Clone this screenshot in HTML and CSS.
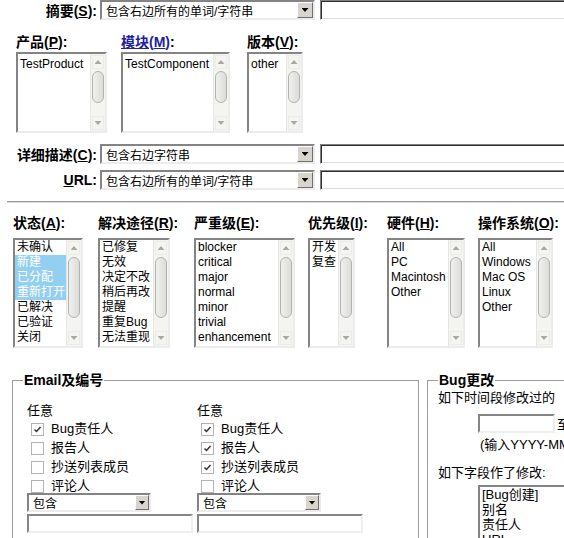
FILE: index.html
```html
<!DOCTYPE html>
<html lang="zh-CN">
<head>
<meta charset="UTF-8">
<meta name="viewport" content="width=device-width, initial-scale=1.0">
<title>查找Bug</title>
<link rel="stylesheet" href="styles.css">
</head>
<body>

<form class="query">

    <div class="text-row">
        <label class="field-label">摘要(<u>S</u>):</label>
        <div class="select wide"><span>包含右边所有的单词/字符串</span><b class="drop"></b></div>
        <input class="text-input" type="text">
    </div>

    <div class="pickers">
        <div class="col">
            <div class="col-title">产品(<u>P</u>):</div>
            <div class="listbox short product">
                <div class="items"><div>TestProduct</div></div>
                <div class="scroll"><i class="up"></i><i class="thumb"></i><i class="down"></i></div>
            </div>
        </div>
        <div class="col">
            <div class="col-title"><a href="#">模块(<u>M</u>)</a>:</div>
            <div class="listbox short component">
                <div class="items"><div>TestComponent</div></div>
                <div class="scroll"><i class="up"></i><i class="thumb"></i><i class="down"></i></div>
            </div>
        </div>
        <div class="col">
            <div class="col-title">版本(<u>V</u>):</div>
            <div class="listbox short version">
                <div class="items"><div>other</div></div>
                <div class="scroll"><i class="up"></i><i class="thumb"></i><i class="down"></i></div>
            </div>
        </div>
    </div>

    <div class="text-row desc">
        <label class="field-label">详细描述(<u>C</u>):</label>
        <div class="select wide"><span>包含右边字符串</span><b class="drop"></b></div>
        <input class="text-input" type="text">
    </div>
    <div class="text-row url">
        <label class="field-label"><u>U</u>RL:</label>
        <div class="select wide"><span>包含右边所有的单词/字符串</span><b class="drop"></b></div>
        <input class="text-input" type="text">
    </div>

    <hr class="rule">

    <div class="attrs">
        <div class="col">
            <div class="col-title">状态(<u>A</u>):</div>
            <div class="listbox tall status">
                <div class="items">
                    <div>未确认</div>
                    <div class="sel">新建</div>
                    <div class="sel">已分配</div>
                    <div class="sel">重新打开</div>
                    <div>已解决</div>
                    <div>已验证</div>
                    <div>关闭</div>
                </div>
                <div class="scroll"><i class="up"></i><i class="thumb"></i><i class="down"></i></div>
            </div>
        </div>
        <div class="col">
            <div class="col-title">解决途径(<u>R</u>):</div>
            <div class="listbox tall resolution">
                <div class="items">
                    <div>已修复</div>
                    <div>无效</div>
                    <div>决定不改</div>
                    <div>稍后再改</div>
                    <div>提醒</div>
                    <div>重复Bug</div>
                    <div>无法重现</div>
                </div>
                <div class="scroll"><i class="up"></i><i class="thumb"></i><i class="down"></i></div>
            </div>
        </div>
        <div class="col">
            <div class="col-title">严重级(<u>E</u>):</div>
            <div class="listbox tall severity">
                <div class="items">
                    <div>blocker</div>
                    <div>critical</div>
                    <div>major</div>
                    <div>normal</div>
                    <div>minor</div>
                    <div>trivial</div>
                    <div>enhancement</div>
                </div>
                <div class="scroll"><i class="up"></i><i class="thumb"></i><i class="down"></i></div>
            </div>
        </div>
        <div class="col">
            <div class="col-title">优先级(<u>I</u>):</div>
            <div class="listbox tall priority">
                <div class="items">
                    <div>开发</div>
                    <div>复查</div>
                </div>
                <div class="scroll"><i class="up"></i><i class="thumb"></i><i class="down"></i></div>
            </div>
        </div>
        <div class="col">
            <div class="col-title">硬件(<u>H</u>):</div>
            <div class="listbox tall hardware">
                <div class="items">
                    <div>All</div>
                    <div>PC</div>
                    <div>Macintosh</div>
                    <div>Other</div>
                </div>
                <div class="scroll"><i class="up"></i><i class="thumb"></i><i class="down"></i></div>
            </div>
        </div>
        <div class="col">
            <div class="col-title">操作系统(<u>O</u>):</div>
            <div class="listbox tall os">
                <div class="items">
                    <div>All</div>
                    <div>Windows</div>
                    <div>Mac OS</div>
                    <div>Linux</div>
                    <div>Other</div>
                </div>
                <div class="scroll"><i class="up"></i><i class="thumb"></i><i class="down"></i></div>
            </div>
        </div>
    </div>

    <div class="lower">
        <fieldset class="email">
            <legend>Email及编号</legend>
            <div class="email-cols">
                <div class="email-col">
                    <div class="any">任意</div>
                    <div class="cb-row"><span class="cb checked"><svg viewBox="0 0 11 11"><polyline points="2.5,5.5 4.5,7.5 8.5,3"/></svg></span>Bug责任人</div>
                    <div class="cb-row"><span class="cb"></span>报告人</div>
                    <div class="cb-row"><span class="cb"></span>抄送列表成员</div>
                    <div class="cb-row"><span class="cb"></span>评论人</div>
                    <div class="select small"><span>包含</span><b class="drop"></b></div>
                    <input class="text-input small" type="text">
                </div>
                <div class="email-col">
                    <div class="any">任意</div>
                    <div class="cb-row"><span class="cb checked"><svg viewBox="0 0 11 11"><polyline points="2.5,5.5 4.5,7.5 8.5,3"/></svg></span>Bug责任人</div>
                    <div class="cb-row"><span class="cb checked"><svg viewBox="0 0 11 11"><polyline points="2.5,5.5 4.5,7.5 8.5,3"/></svg></span>报告人</div>
                    <div class="cb-row"><span class="cb checked"><svg viewBox="0 0 11 11"><polyline points="2.5,5.5 4.5,7.5 8.5,3"/></svg></span>抄送列表成员</div>
                    <div class="cb-row"><span class="cb"></span>评论人</div>
                    <div class="select small"><span>包含</span><b class="drop"></b></div>
                    <input class="text-input small" type="text">
                </div>
            </div>
        </fieldset>

        <fieldset class="changes">
            <legend>Bug更改</legend>
            <div class="since">如下时间段修改过的</div>
            <div class="date-row"><input class="text-input small date" type="text"> 至 <input class="text-input small date" type="text"></div>
            <div class="hint">(输入YYYY-MM-DD或相对日期)</div>
            <div class="since fields">如下字段作了修改:</div>
            <div class="listbox fields-list">
                <div class="items">
                    <div>[Bug创建]</div>
                    <div>别名</div>
                    <div>责任人</div>
                    <div>URL</div>
                    <div>抄送</div>
                </div>
            </div>
        </fieldset>
    </div>

</form>

</body>
</html>
```

FILE: styles.css
```css
* {
    box-sizing: border-box;
}
html, body {
    overflow: hidden;
}
body {
    margin: 0;
    font-family: "Liberation Sans", "Noto Sans CJK SC", sans-serif;
    font-size: 13px;
    color: #000;
    background: #fff;
}
.query {
    width: 720px;
}

/* label + select + text rows */
.text-row {
    display: flex;
    align-items: center;
    height: 20px;
}
.text-row.desc {
    margin-top: 11px;
}
.text-row.url {
    margin-top: 6px;
}
.field-label {
    width: 100px;
    padding-right: 3px;
    text-align: right;
    font-weight: bold;
    font-size: 14px;
    white-space: nowrap;
}

/* fake select box */
.select {
    display: flex;
    align-items: center;
    justify-content: space-between;
    height: 20px;
    padding-left: 4px;
    border: 2px solid;
    border-color: #848484 #ececec #ececec #848484;
    background: #fff;
    font-size: 12px;
    white-space: nowrap;
}
.select.wide {
    width: 215px;
    margin-right: 5px;
}
.select.small {
    width: 124px;
    height: 19px;
}
.drop {
    display: flex;
    align-items: center;
    justify-content: center;
    width: 16px;
    height: 16px;
    background: #d8d5cc;
    border: 1px solid;
    border-color: #fff #6e6e6e #6e6e6e #fff;
}
.select.small .drop {
    width: 14px;
    height: 15px;
}
.drop::after {
    content: "";
    width: 7px;
    height: 4px;
    background: #000;
    clip-path: polygon(0 0, 100% 0, 50% 100%);
}

.text-input {
    width: 300px;
    height: 20px;
    margin: 0;
    padding: 0 3px;
    border: 1px solid;
    border-color: #808080 #fff #fff #808080;
    box-shadow: inset 1px 1px 0 #303030, inset -1px -1px 0 #e0ddd6;
    background: #fff;
    font: inherit;
}
.text-input.small {
    width: 166px;
    height: 19px;
    margin-top: 2px;
    border: 2px solid;
    border-color: #868686 #efefef #efefef #868686;
    box-shadow: none;
}

/* column headers above listboxes */
.col-title {
    font-weight: bold;
    font-size: 14px;
    line-height: 16px;
    white-space: nowrap;
}
.col-title a {
    color: #22229a;
}

.pickers {
    display: grid;
    grid-template-columns: 105px 126px auto;
    padding-left: 16px;
    margin-top: 14px;
}
.pickers .col-title {
    margin-bottom: 2px;
}

.rule {
    height: 2px;
    margin: 11px 0 0 7px;
    border: 0;
    border-top: 1px solid #9a9a9a;
    border-bottom: 1px solid #d8d8d8;
}

.attrs {
    display: grid;
    grid-template-columns: 85px 96px 114px 79px 91px auto;
    padding-left: 13px;
    margin-top: 12px;
}
.attrs .col-title {
    margin-bottom: 7px;
}

/* listbox */
.listbox {
    display: flex;
    border: 2px solid;
    border-color: #848484 #ececec #ececec #848484;
    background: #fff;
    font-size: 12px;
    line-height: 15px;
}
.listbox.short {
    height: 81px;
}
.listbox.tall {
    height: 110px;
}
.product { width: 91px; }
.component { width: 109px; }
.version { width: 56px; }
.status { width: 70px; }
.resolution { width: 72px; }
.severity { width: 101px; }
.priority { width: 47px; }
.hardware { width: 78px; }
.os { width: 75px; }

.items {
    flex: 1;
    overflow: hidden;
    white-space: nowrap;
}
.listbox.short .items {
    padding-top: 3px;
}
.items div {
    padding-left: 2px;
}
.items .sel {
    background: #93cff1;
    color: #fff;
}

/* fake scrollbar */
.scroll {
    display: flex;
    flex-direction: column;
    width: 15px;
    padding: 1px;
    background: #f4f4f1;
    border-left: 1px solid #e6e6e2;
}
.scroll i {
    display: flex;
    align-items: center;
    justify-content: center;
}
.scroll .up,
.scroll .down {
    height: 14px;
    border: 1px solid #ebebe7;
}
.scroll .up::after,
.scroll .down::after {
    content: "";
    width: 7px;
    height: 4px;
    background: #a8a8a4;
}
.scroll .up::after {
    clip-path: polygon(50% 0, 100% 100%, 0 100%);
}
.scroll .down::after {
    clip-path: polygon(0 0, 100% 0, 50% 100%);
}
.scroll .thumb {
    flex: 1;
    margin: 2px 0 13px;
    border: 1px solid #b2b2ae;
    border-radius: 6px;
    background: linear-gradient(to right, #f0f0ee, #dcdcd8);
}

/* lower fieldsets */
.lower {
    display: flex;
    padding-left: 12px;
    margin-top: 24px;
}
fieldset {
    margin: 0;
    min-width: 0;
    border: 1px solid #9c9c9c;
    padding: 0 0 30px 10px;
}
legend {
    padding: 0 1px;
    font-weight: bold;
    font-size: 14px;
    line-height: 16px;
}
.email {
    width: 407px;
    padding-top: 15px;
}
.changes {
    width: 280px;
    margin-left: 8px;
    padding-top: 2px;
}

.email-cols {
    display: grid;
    grid-template-columns: 170px 170px;
    padding-left: 4px;
}
.any {
    line-height: 15px;
    margin-bottom: 4px;
}
.cb-row {
    display: flex;
    align-items: flex-start;
    gap: 7px;
    height: 19px;
    padding-left: 4px;
    line-height: 14px;
}
.cb-row:nth-child(5) {
    height: 14px;
}
.cb {
    display: flex;
    width: 13px;
    height: 13px;
    margin-top: 1px;
    border: 1px solid #b4b4b4;
    background: #fff;
}
.cb svg {
    width: 11px;
    height: 11px;
    fill: none;
    stroke: #333;
    stroke-width: 1.5;
}

.since {
    line-height: 15px;
    white-space: nowrap;
}
.date-row {
    display: flex;
    align-items: center;
    gap: 2px;
    margin: 9px 0 0 40px;
    white-space: nowrap;
}
.text-input.date {
    width: 77px;
    margin-top: 0;
}
.hint {
    margin: 4px 0 0 42px;
    line-height: 15px;
    white-space: nowrap;
}
.since.fields {
    margin-top: 13px;
}
.fields-list {
    width: 200px;
    height: 90px;
    margin: 5px 0 0 40px;
    font-size: 13px;
}
```
